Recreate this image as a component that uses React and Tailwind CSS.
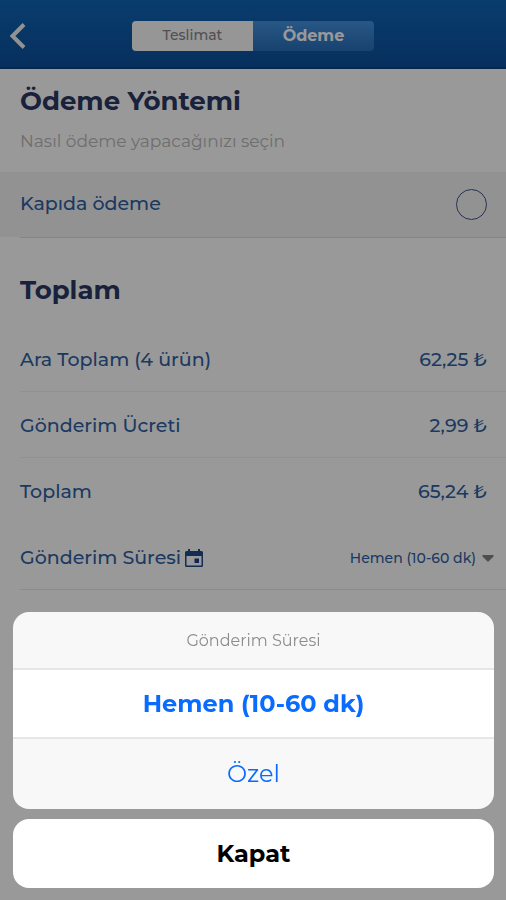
import { useState } from 'react';

const TOTALS = [
  { label: 'Ara Toplam (4 ürün)', value: '62,25', line: true },
  { label: 'Gönderim Ücreti', value: '2,99', line: true },
  { label: 'Toplam', value: '65,24', line: false },
];

const TIMES = ['Hemen (10-60 dk)', 'Özel'];

// ========== Icons ==========
function BackIcon() {
  return (
    <svg width="18" height="28" viewBox="0 0 18 28" fill="none" aria-hidden="true">
      <path d="M16 2.5 4.500 14 16 25.5" stroke="#f4f4f4" strokeWidth="4" />
    </svg>
  );
}

function CalendarIcon() {
  return (
    <svg width="18" height="19" viewBox="0 0 18 19" fill="none" aria-hidden="true">
      <path d="M3 0h2v2h8V0h2v2h1.500a1.500 1.500 0 0 1 1.500 1.500v13a1.500 1.500 0 0 1-1.500 1.500h-15A1.500 1.500 0 0 1 0 16.500v-13A1.500 1.500 0 0 1 1.500 2H3zM1.500 7v9.500h15V7z" fill="#1f4a8a" fillRule="evenodd" />
      <path d="M9.500 9.500h4.500V14H9.500z" fill="#1f3a94" />
    </svg>
  );
}

function CaretIcon() {
  return (
    <svg width="12" height="7" viewBox="0 0 12 7" aria-hidden="true">
      <path d="M1 0h10l1 1-6 6-6-6z" fill="#848484" />
    </svg>
  );
}

// ========== Header ==========
function Header() {
  return (
    <header className="grid grid-cols-[1fr_auto_1fr] items-center h-[69px] px-2 pt-1 bg-linear-to-b from-[#0f66b8] to-[#0c509c] border-b-2 border-[#0a4380]">
      <button type="button" aria-label="Geri" className="justify-self-start">
        <BackIcon />
      </button>
      <nav className="flex h-[30px] w-[242px] rounded-sm overflow-hidden">
        <button type="button" className="flex-1 bg-[#fafafa] text-[14px] font-medium text-[#85858f]">Teslimat</button>
        <button type="button" className="flex-1 bg-linear-to-b from-[#4492e0] to-[#286fba] text-base text-white font-bold">Ödeme</button>
      </nav>
    </header>
  );
}

// ========== Checkout page ==========
function Checkout({ time, onTime }) {
  return (
    <main className="text-[#305fa3]">
      <section>
        <h1 className="px-5 pt-4 text-[26px] leading-8 font-bold text-[#2c3763]">Ödeme Yöntemi</h1>
        <p className="px-5 pt-3 pb-[19px] text-[17px] leading-6 text-[#b8b8b8]">Nasıl ödeme yapacağınızı seçin</p>
        <label className="flex items-center justify-between h-[65px] pl-5 pr-[19px] bg-[#f3f3f3] text-[19px] font-medium">
          Kapıda ödeme
          <input type="radio" name="payment" className="appearance-none size-[31px] rounded-full border border-[#45538f]" />
        </label>
        <div className="ml-5 h-px bg-[#dcdcdc]" />
      </section>

      <section>
        <h2 className="px-5 pt-9 pb-5 text-[26px] leading-8 font-bold text-[#2c3763]">Toplam</h2>
        <dl className="pl-5 text-[19px] font-medium">
          {TOTALS.map(({ label, value, line }) => (
            <div
              key={label}
              className={line
                ? 'flex items-center justify-between h-[66px] pt-[3px] pr-[19px] border-b border-[#f2f2f2]'
                : 'flex items-center justify-between h-[66px] pt-[3px] pr-[19px]'}
            >
              <dt>{label}</dt>
              <dd>{value} ₺</dd>
            </div>
          ))}
          <div className="flex items-center justify-between h-[66px] pt-[3px] pr-3 border-b border-[#e8e8e8]">
            <dt className="flex items-center gap-1">
              <label htmlFor="time">Gönderim Süresi</label>
              <CalendarIcon />
            </dt>
            <dd className="flex items-center gap-1.5 text-[14px]">
              <select
                id="time"
                value={time}
                onChange={e => onTime(e.target.value)}
                className="appearance-none field-sizing-content bg-transparent text-right"
              >
                {TIMES.map(t => <option key={t}>{t}</option>)}
              </select>
              <CaretIcon />
            </dd>
          </div>
        </dl>
      </section>
    </main>
  );
}

// ========== Action sheet ==========
function TimeSheet({ time, onPick, onClose }) {
  return (
    <div className="fixed inset-0 flex flex-col justify-end gap-2.5 pl-[13px] pr-3 pb-3 bg-black/40">
      <div role="dialog" aria-labelledby="sheet-title" className="flex flex-col rounded-2xl overflow-hidden bg-[#f8f8f8] divide-y-2 divide-[#e6e6e6] text-center">
        <h3 id="sheet-title" className="h-[58px] text-base leading-[58px] text-[#8c8c8c]">Gönderim Süresi</h3>
        {TIMES.map(t => (
          <button
            key={t}
            type="button"
            onClick={() => onPick(t)}
            className={t === time
              ? 'h-[69px] bg-white text-2xl font-bold text-[#0a6cff]'
              : 'h-[70px] text-2xl text-[#0a6cff]'}
          >
            {t}
          </button>
        ))}
      </div>
      <button type="button" onClick={onClose} className="h-[69px] rounded-2xl bg-white text-2xl font-bold text-black">
        Kapat
      </button>
    </div>
  );
}

// ========== App ==========
export default function App() {
  const [time, setTime] = useState(TIMES[0]);
  const [open, setOpen] = useState(true);

  const handlePick = (t) => {
    setTime(t);
    setOpen(false);
  };

  return (
    <div className="min-h-screen bg-white font-[Montserrat,Inter,sans-serif]">
      <Header />
      <Checkout time={time} onTime={setTime} />
      {open && <TimeSheet time={time} onPick={handlePick} onClose={() => setOpen(false)} />}
    </div>
  );
}
